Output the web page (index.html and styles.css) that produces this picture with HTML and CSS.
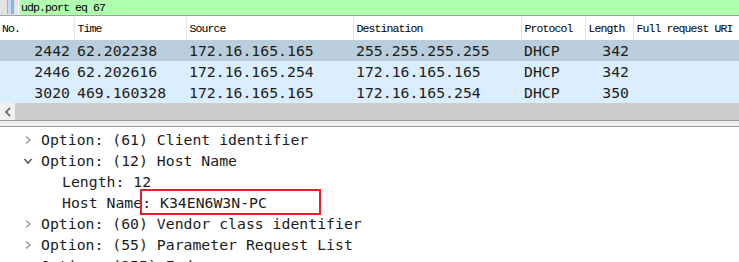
FILE: index.html
```html
<!DOCTYPE html>
<html lang="en">
<head>
  <meta charset="UTF-8" />
  <title>udp.port eq 67</title>
  <link rel="stylesheet" href="styles.css">
</head>
<body>
  <!-- Filter bar -->
  <div class="filter">
    <span class="bookmark">
      <svg width="18" height="15" viewBox="0 0 18 15">
        <rect x="0" y="0" width="18" height="15" fill="#e4e4e4"/>
        <rect x="7" y="0" width="7" height="14" fill="#8fb4e0"/>
        <rect x="8" y="0" width="3" height="14" fill="#c4d9f2"/>
      </svg>
    </span>
    <div class="filter-input">udp.port eq 67</div>
  </div>

  <!-- Packet list -->
  <table class="packets">
    <colgroup>
      <col class="c-no"><col class="c-time"><col class="c-src"><col class="c-dst">
      <col class="c-proto"><col class="c-len"><col>
    </colgroup>
    <tr class="head">
      <th>No.</th><th>Time</th><th>Source</th><th>Destination</th>
      <th>Protocol</th><th>Length</th><th>Full request URI</th>
    </tr>
    <tr class="selected">
      <td class="num">2442</td><td>62.202238</td><td>172.16.165.165</td><td>255.255.255.255</td>
      <td>DHCP</td><td class="num">342</td><td></td>
    </tr>
    <tr>
      <td class="num">2446</td><td>62.202616</td><td>172.16.165.254</td><td>172.16.165.165</td>
      <td>DHCP</td><td class="num">342</td><td></td>
    </tr>
    <tr>
      <td class="num">3020</td><td>469.160328</td><td>172.16.165.165</td><td>172.16.165.254</td>
      <td>DHCP</td><td class="num">350</td><td></td>
    </tr>
  </table>

  <div class="hscroll">
    <span class="scroll-btn">
      <svg width="8" height="10" viewBox="0 0 8 10"><path d="M6 1 L2 5 L6 9" fill="none" stroke="#555" stroke-width="1.6"/></svg>
    </span>
  </div>
  <div class="splitter"></div>

  <!-- Packet details -->
  <div class="details">
    <div class="line"><span class="arrow"><svg width="10" height="10" viewBox="0 0 10 10"><path d="M3 1.5 L7 5 L3 8.5" fill="none" stroke="#9a9a9a" stroke-width="1.5"/></svg></span>Option: (61) Client identifier</div>
    <div class="line"><span class="arrow"><svg width="10" height="10" viewBox="0 0 10 10"><path d="M1.5 3 L5 7 L8.5 3" fill="none" stroke="#555" stroke-width="1.5"/></svg></span>Option: (12) Host Name</div>
    <div class="line sub">Length: 12</div>
    <div class="line sub">Host Name: K34EN6W3N-PC</div>
    <div class="line"><span class="arrow"><svg width="10" height="10" viewBox="0 0 10 10"><path d="M3 1.5 L7 5 L3 8.5" fill="none" stroke="#9a9a9a" stroke-width="1.5"/></svg></span>Option: (60) Vendor class identifier</div>
    <div class="line"><span class="arrow"><svg width="10" height="10" viewBox="0 0 10 10"><path d="M3 1.5 L7 5 L3 8.5" fill="none" stroke="#9a9a9a" stroke-width="1.5"/></svg></span>Option: (55) Parameter Request List</div>
    <div class="line"><span class="arrow"><svg width="10" height="10" viewBox="0 0 10 10"><path d="M3 1.5 L7 5 L3 8.5" fill="none" stroke="#9a9a9a" stroke-width="1.5"/></svg></span>Option: (255) End</div>
    <div class="highlight"></div>
  </div>
</body>
</html>
```
FILE: styles.css
```css
body {
  margin: 0;
  background-color: #fff;
  width: 739px;
  height: 262px;
  overflow: hidden;
}

/* Filter bar */
.filter {
  display: flex;
  height: 15px;
  border-bottom: 1px solid #a0a0a0;
}
.bookmark {
  display: block;
  width: 19px;
  height: 15px;
}
.filter-input {
  flex: 1;
  background-color: #afffaf;
  font-family: "Liberation Mono", monospace;
  font-size: 11.5px;
  letter-spacing: -0.9px;
  line-height: 15px;
  padding-left: 2px;
  color: #000;
}

/* Packet list */
.packets {
  width: 739px;
  margin-top: 1px;
  border-collapse: collapse;
  table-layout: fixed;
}
.c-no { width: 74px; }
.c-time { width: 112px; }
.c-src { width: 167px; }
.c-dst { width: 168px; }
.c-proto { width: 64px; }
.c-len { width: 48px; }

.packets th {
  height: 23px;
  padding: 0 3px;
  text-align: left;
  font-family: "Liberation Mono", monospace;
  font-size: 11.5px;
  letter-spacing: -0.9px;
  font-weight: normal;
  color: #000;
  background-color: #fff;
  border-left: 1px solid #e5e5e5;
  white-space: nowrap;
  overflow: hidden;
}
.packets th:first-child {
  border-left: none;
  padding-left: 2px;
}
.packets td {
  height: 21px;
  padding: 0 3px 0 3px;
  font-family: "DejaVu Sans Mono", monospace;
  font-size: 14.8px;
  color: #1c1c1c;
  background-color: #daeeff;
  white-space: nowrap;
  overflow: hidden;
}
.packets td.num {
  text-align: right;
  padding-right: 4px;
}
.packets tr.selected td {
  background-color: #b9cddb;
}

/* Scroll bar */
.hscroll {
  height: 17px;
  background-color: #cdcdcd;
  border-bottom: 1px solid #999;
}
.scroll-btn {
  display: flex;
  align-items: center;
  justify-content: center;
  width: 15px;
  height: 17px;
  background-color: #f0f0f0;
}
.splitter {
  height: 5px;
  background-color: #f0f0f0;
  border-bottom: 1px solid #999;
}

/* Packet details */
.details {
  position: relative;
  padding-top: 2px;
  font-family: "DejaVu Sans Mono", monospace;
  font-size: 14.8px;
  color: #1c1c1c;
}
.line {
  display: flex;
  align-items: center;
  height: 21px;
  padding-left: 23px;
  white-space: nowrap;
}
.arrow {
  display: flex;
  align-items: center;
  width: 18px;
}
.line.sub {
  padding-left: 62px;
}
.highlight {
  position: absolute;
  left: 140px;
  top: 62px;
  width: 177px;
  height: 22px;
  border: 2px solid #e8202a;
}
```
